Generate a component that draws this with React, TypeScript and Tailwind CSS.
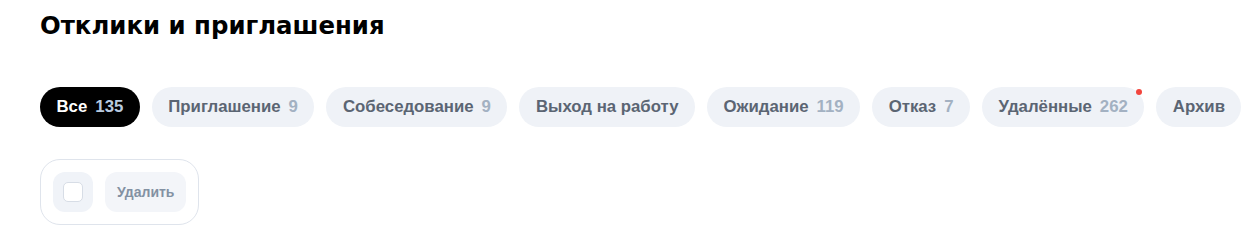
const tabs: { label: string; count?: number; dot?: boolean }[] = [
  { label: "Все", count: 135 },
  { label: "Приглашение", count: 9 },
  { label: "Собеседование", count: 9 },
  { label: "Выход на работу" },
  { label: "Ожидание", count: 119 },
  { label: "Отказ", count: 7 },
  { label: "Удалённые", count: 262, dot: true },
  { label: "Архив" },
];

function Tab({
  label,
  count,
  dot,
  active,
}: {
  label: string;
  count?: number;
  dot?: boolean;
  active?: boolean;
}) {
  return (
    <button
      className={
        active
          ? "relative flex h-10 shrink-0 items-center gap-2 rounded-full bg-black px-[16.5px] text-[16.8px] font-bold text-white"
          : "relative flex h-10 shrink-0 items-center gap-2 rounded-full bg-[#eff2f7] px-[16.5px] text-[16.8px] font-bold text-[#5b6573]"
      }
    >
      <span>{label}</span>
      {count !== undefined ? (
        <span className={active ? "text-[#b9cbe0]" : "text-[#a3b1c2]"}>{count}</span>
      ) : null}
      {dot ? (
        <span className="absolute right-[2px] top-[2px] h-[6px] w-[6px] rounded-full bg-[#f2453d]" />
      ) : null}
    </button>
  );
}

export default function App() {
  return (
    <div
      className="h-[233px] w-[1248px] overflow-hidden bg-white px-10 pt-[10px]"
      style={{ fontFamily: "'Liberation Sans', Arial, sans-serif" }}
    >
      <h1
        className="text-[24.4px] font-bold leading-8 text-black"
        style={{ fontFamily: "'DejaVu Sans', sans-serif" }}
      >
        Отклики и приглашения
      </h1>

      <div className="mt-[45px] flex gap-3">
        {tabs.map((tab, i) => (
          <Tab key={tab.label} {...tab} active={i === 0} />
        ))}
      </div>

      <div className="mt-8 inline-flex gap-3 rounded-[20px] border border-[#dfe4ec] p-3">
        <div className="flex h-10 w-10 items-center justify-center rounded-xl bg-[#f0f3f8]">
          <div className="h-5 w-5 rounded-[5px] border border-[#d7dde6] bg-white" />
        </div>
        <button className="flex h-10 items-center rounded-xl bg-[#f3f5f9] px-3 text-[14px] font-bold text-[#8391a3]">
          Удалить
        </button>
      </div>
    </div>
  );
}
